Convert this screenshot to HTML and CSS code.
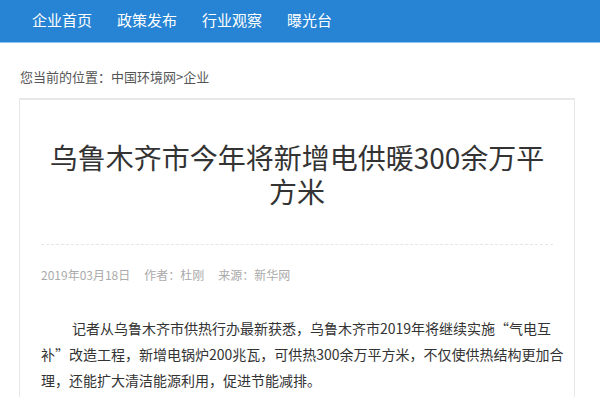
FILE: index.html
```html
<!DOCTYPE html>
<html lang="zh-CN">
<head>
    <meta charset="UTF-8">
    <meta name="viewport" content="width=device-width, initial-scale=1.0">
    <title>乌鲁木齐市今年将新增电供暖300余万平方米</title>
    <link rel="stylesheet" href="styles.css">
</head>
<body>
    <div class="nav">
        <a href="#">企业首页</a>
        <a href="#">政策发布</a>
        <a href="#">行业观察</a>
        <a href="#">曝光台</a>
    </div>

    <div class="main">
        <p class="crumb">您当前的位置：<a href="#">中国环境网</a>&gt;<a href="#">企业</a></p>

        <div class="article">
            <h1>乌鲁木齐市今年将新增电供暖300余万平方米</h1>
            <div class="meta">
                <span>2019年03月18日</span>
                <span>作者：杜刚</span>
                <span>来源：新华网</span>
            </div>
            <div class="content">
                <p>记者从乌鲁木齐市供热行办最新获悉，乌鲁木齐市2019年将继续实施“气电互补”改造工程，新增电锅炉200兆瓦，可供热300余万平方米，不仅使供热结构更加合理，还能扩大清洁能源利用，促进节能减排。</p>
            </div>
        </div>
    </div>
</body>
</html>
```

FILE: styles.css
```css
/* 基础 */
* {
    margin: 0;
    padding: 0;
    box-sizing: border-box;
}

body {
    font-family: "Noto Sans CJK SC", "Liberation Sans", sans-serif;
    background-color: #fff;
    color: #333;
}

a {
    color: inherit;
    text-decoration: none;
}

/* 顶部导航 */
.nav {
    display: flex;
    gap: 25px;
    height: 43px;
    padding: 0 0 0 32px;
    align-items: center;
    background-color: #2784d4;
    border-bottom: 1px solid #8cc5ee;
}

.nav a {
    color: #fff;
    font-size: 15px;
    line-height: 20px;
    padding-bottom: 2px;
}

/* 主体 */
.main {
    padding: 0 25px 0 19px;
}

.crumb {
    margin-top: 24px;
    padding-left: 1px;
    font-size: 13px;
    line-height: 20px;
    color: #555;
}

/* 文章 */
.article {
    margin-top: 11px;
    border: 1px solid #e8e8e8;
    border-top-width: 2px;
    padding: 40px 10px 40px 21px;
}

.article h1 {
    font-size: 28px;
    font-weight: normal;
    line-height: 34px;
    text-align: center;
    color: #333;
    margin-right: 11px;
    padding-bottom: 36px;
    border-bottom: 1px dashed #e6e6e6;
}

.meta {
    display: flex;
    gap: 14px;
    margin-top: 20px;
    font-size: 12px;
    line-height: 20px;
    color: #aaa;
}

.content {
    margin-top: 30px;
    font-size: 14px;
    line-height: 26px;
    color: #333;
}

.content p {
    text-indent: 31px;
}
```
